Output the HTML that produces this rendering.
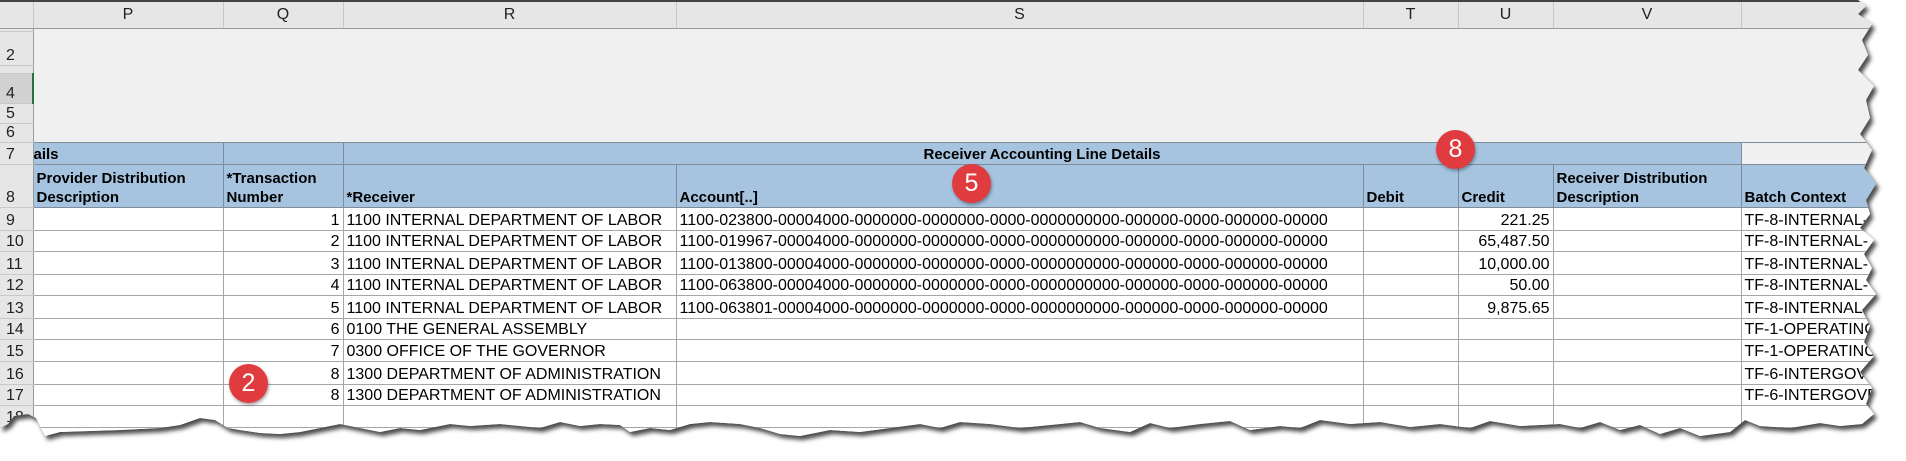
<!DOCTYPE html>
<html><head><meta charset="utf-8"><style>
html,body{margin:0;padding:0;background:#fff;width:1906px;height:461px;overflow:hidden}
.wrap{position:absolute;left:0;top:0;filter:drop-shadow(3px 4px 2px rgba(0,0,0,.7))}
.sheet{position:relative;width:1900px;height:450px;background:#f0f0f0;
clip-path:polygon(0 0,1858px 0,1866px 6px,1858px 14px,1872px 24px,1862px 40px,1868px 55px,1858px 70px,1874px 86px,1866px 100px,1870px 118px,1860px 134px,1872px 150px,1864px 168px,1876px 184px,1866px 200px,1870px 214px,1860px 228px,1874px 240px,1864px 254px,1872px 268px,1866px 280px,1876px 294px,1862px 310px,1870px 326px,1864px 342px,1874px 356px,1860px 372px,1872px 388px,1866px 404px,1874px 414px,1862px 424px,1840px 426px,1820px 423px,1790px 428px,1760px 426px,1745px 420px,1730px 432px,1700px 436px,1680px 428px,1660px 434px,1640px 425px,1620px 430px,1600px 422px,1580px 428px,1560px 424px,1520px 426px,1490px 421px,1470px 428px,1440px 424px,1410px 427px,1380px 422px,1350px 424px,1320px 420px,1300px 428px,1280px 426px,1250px 430px,1230px 421px,1200px 424px,1170px 428px,1150px 423px,1130px 432px,1100px 428px,1080px 422px,1050px 425px,1020px 428px,990px 424px,960px 422px,940px 428px,920px 424px,890px 428px,860px 432px,830px 430px,800px 436px,780px 434px,760px 428px,740px 424px,710px 422px,690px 424px,670px 430px,650px 428px,630px 432px,620px 425px,600px 424px,580px 426px,560px 422px,540px 428px,500px 424px,470px 426px,450px 424px,420px 430px,400px 428px,380px 432px,360px 428px,340px 424px,300px 432px,280px 434px,260px 433px,240px 430px,228px 428px,215px 420px,200px 418px,180px 425px,160px 428px,120px 430px,90px 431px,60px 432px,45px 436px,36px 418px,28px 414px,14px 416px,8px 424px,0 428px)}
table{position:absolute;left:0;top:0;width:1921px;border-collapse:collapse;table-layout:fixed;font-family:"Liberation Sans",Arial,sans-serif;font-size:16px;color:#000}
td{padding:0 3px;overflow:hidden;white-space:nowrap;line-height:18px;vertical-align:bottom}
.h td{background:#e6e6e6;text-align:center;font-size:16px;color:#222;border-right:1px solid #c8c8c8;border-bottom:1px solid #9a9a9a;border-top:2px solid #444;vertical-align:middle}
.rn{background:#e6e6e6;color:#222;text-align:left;padding-left:6px;border-right:1px solid #9a9a9a;border-bottom:1px solid #c8c8c8}
.g td.c{background:#f0f0f0}
.b{background:#a6c4e0;font-weight:bold;font-size:15px;border:1px solid #7f8c99}
.d td.c{background:#fff;border:1px solid #a6a6a6}
.r{text-align:right}
.badge{position:absolute;width:39px;height:39px;border-radius:50%;background:#e03b3f;color:#fff;font-family:"Liberation Sans",Arial,sans-serif;font-size:25px;line-height:39px;text-align:center;box-shadow:1px 2px 3px rgba(0,0,0,.35)}
</style></head><body>
<div class="wrap"><div class="sheet">
<table>
<colgroup><col style="width:33px"><col style="width:190px"><col style="width:120px"><col style="width:333px"><col style="width:687px"><col style="width:95px"><col style="width:95px"><col style="width:188px"><col style="width:180px"></colgroup>
<tr class="h" style="height:27px"><td style="background:#e6e6e6"></td><td>P</td><td>Q</td><td>R</td><td>S</td><td>T</td><td>U</td><td>V</td><td></td></tr>
<tr class="g" style="height:3px"><td class="rn" style="font-size:4px;line-height:3px"></td><td class="c" colspan="8"></td></tr>
<tr class="g" style="height:34px"><td class="rn">2</td><td class="c" colspan="8"></td></tr>
<tr class="g" style="height:8px"><td class="rn" style="font-size:6px;line-height:6px"></td><td class="c" colspan="8"></td></tr>
<tr class="g" style="height:30px"><td class="rn" style="background:#d2d2d2;border-right:2px solid #217346">4</td><td class="c" colspan="8"></td></tr>
<tr class="g" style="height:20px"><td class="rn">5</td><td class="c" colspan="8"></td></tr>
<tr class="g" style="height:17px"><td class="rn">6</td><td class="c" colspan="8" style="border-bottom:1px solid #7f8c99"></td></tr>
<tr style="height:22px"><td class="rn">7</td><td class="b" style="padding-left:0">ails</td><td class="b"></td><td class="b" colspan="5" style="text-align:center">Receiver Accounting Line Details</td><td style="background:#f0f0f0;border:none;border-bottom:1px solid #7f8c99;border-left:1px solid #7f8c99"></td></tr>
<tr style="height:43px"><td class="rn">8</td><td class="b" style="white-space:normal;line-height:19px">Provider Distribution Description</td><td class="b" style="white-space:normal;line-height:19px">*Transaction Number</td><td class="b">*Receiver</td><td class="b">Account[..]</td><td class="b">Debit</td><td class="b">Credit</td><td class="b" style="white-space:normal;line-height:19px">Receiver Distribution Description</td><td class="b">Batch Context</td></tr>
<tr class="d" style="height:23px"><td class="rn">9</td><td class="c"></td><td class="c r">1</td><td class="c">1100 INTERNAL DEPARTMENT OF LABOR</td><td class="c">1100-023800-00004000-0000000-0000000-0000-0000000000-000000-0000-000000-00000</td><td class="c"></td><td class="c r">221.25</td><td class="c"></td><td class="c">TF-8-INTERNAL-</td></tr>
<tr class="d" style="height:21px"><td class="rn">10</td><td class="c"></td><td class="c r">2</td><td class="c">1100 INTERNAL DEPARTMENT OF LABOR</td><td class="c">1100-019967-00004000-0000000-0000000-0000-0000000000-000000-0000-000000-00000</td><td class="c"></td><td class="c r">65,487.50</td><td class="c"></td><td class="c">TF-8-INTERNAL-</td></tr>
<tr class="d" style="height:23px"><td class="rn">11</td><td class="c"></td><td class="c r">3</td><td class="c">1100 INTERNAL DEPARTMENT OF LABOR</td><td class="c">1100-013800-00004000-0000000-0000000-0000-0000000000-000000-0000-000000-00000</td><td class="c"></td><td class="c r">10,000.00</td><td class="c"></td><td class="c">TF-8-INTERNAL-</td></tr>
<tr class="d" style="height:21px"><td class="rn">12</td><td class="c"></td><td class="c r">4</td><td class="c">1100 INTERNAL DEPARTMENT OF LABOR</td><td class="c">1100-063800-00004000-0000000-0000000-0000-0000000000-000000-0000-000000-00000</td><td class="c"></td><td class="c r">50.00</td><td class="c"></td><td class="c">TF-8-INTERNAL-</td></tr>
<tr class="d" style="height:23px"><td class="rn">13</td><td class="c"></td><td class="c r">5</td><td class="c">1100 INTERNAL DEPARTMENT OF LABOR</td><td class="c">1100-063801-00004000-0000000-0000000-0000-0000000000-000000-0000-000000-00000</td><td class="c"></td><td class="c r">9,875.65</td><td class="c"></td><td class="c">TF-8-INTERNAL-</td></tr>
<tr class="d" style="height:21px"><td class="rn">14</td><td class="c"></td><td class="c r">6</td><td class="c">0100 THE GENERAL ASSEMBLY</td><td class="c"></td><td class="c"></td><td class="c"></td><td class="c"></td><td class="c">TF-1-OPERATING</td></tr>
<tr class="d" style="height:22px"><td class="rn">15</td><td class="c"></td><td class="c r">7</td><td class="c">0300 OFFICE OF THE GOVERNOR</td><td class="c"></td><td class="c"></td><td class="c"></td><td class="c"></td><td class="c">TF-1-OPERATING</td></tr>
<tr class="d" style="height:23px"><td class="rn">16</td><td class="c"></td><td class="c r">8</td><td class="c">1300 DEPARTMENT OF ADMINISTRATION</td><td class="c"></td><td class="c"></td><td class="c"></td><td class="c"></td><td class="c">TF-6-INTERGOV</td></tr>
<tr class="d" style="height:21px"><td class="rn">17</td><td class="c"></td><td class="c r">8</td><td class="c">1300 DEPARTMENT OF ADMINISTRATION</td><td class="c"></td><td class="c"></td><td class="c"></td><td class="c"></td><td class="c">TF-6-INTERGOVE</td></tr>
<tr class="d" style="height:22px"><td class="rn">18</td><td class="c"></td><td class="c"></td><td class="c"></td><td class="c"></td><td class="c"></td><td class="c"></td><td class="c"></td><td class="c"></td></tr>
<tr class="d" style="height:22px"><td class="rn"></td><td class="c"></td><td class="c"></td><td class="c"></td><td class="c"></td><td class="c"></td><td class="c"></td><td class="c"></td><td class="c"></td></tr>
</table>
<div class="badge" style="left:1436px;top:130px">8</div>
<div class="badge" style="left:952px;top:164px">5</div>
<div class="badge" style="left:229px;top:364px">2</div>
</div></div>
</body></html>
